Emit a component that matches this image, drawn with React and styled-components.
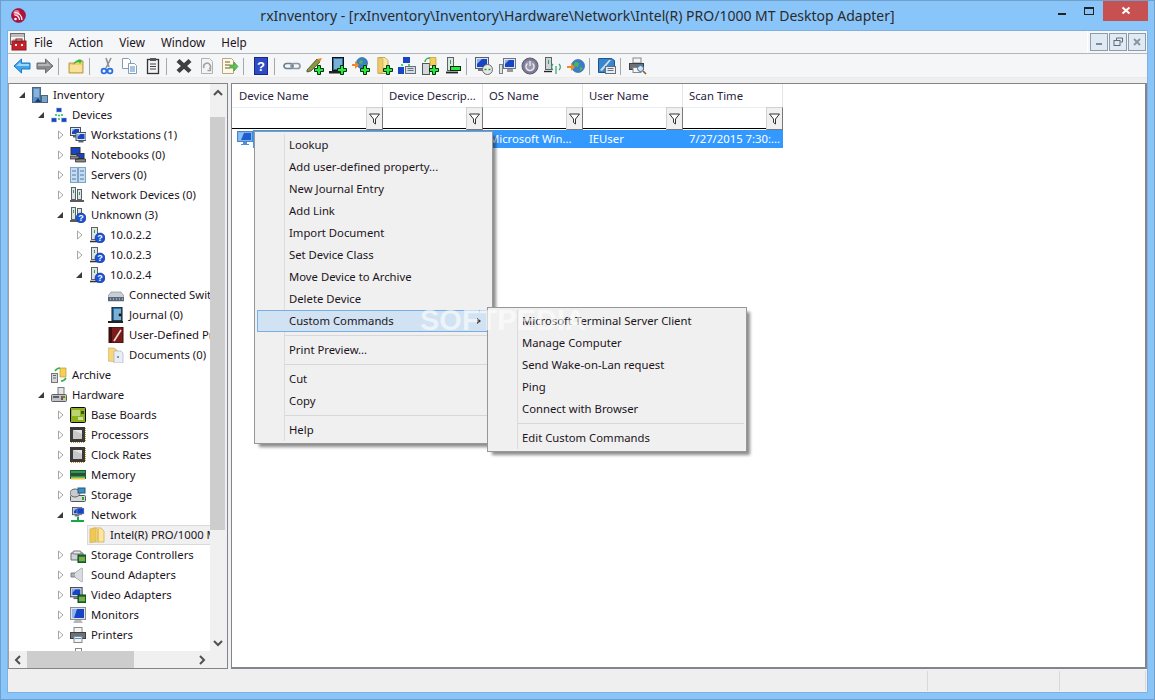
import React from "react";
import styled, { createGlobalStyle } from "styled-components";

const Global = createGlobalStyle`
  html, body { margin: 0; padding: 0; width: 1155px; height: 700px; overflow: hidden; }
  #root { width: 1155px; height: 700px; }
  * { box-sizing: border-box; }
`;

const FONT = `"Noto Sans", "Open Sans", "DejaVu Sans", sans-serif`;

const Win = styled.div`
  width: 1155px; height: 700px; background: #8ac5fa; border: 1px solid #6f9fcb;
  display: flex; flex-direction: column; font-family: ${FONT}; font-size: 11.3px; color: #1c1422;
  position: relative; overflow: hidden;
`;
const TitleBar = styled.div`
  height: 29px; flex: none; display: grid; grid-template-columns: 1fr auto 1fr; align-items: center;
`;
const LogoCell = styled.div`padding: 0 0 1px 10px; display: flex; align-items: center;`;
const TitleText = styled.div`font-size: 14px; color: #2b2b2b; white-space: nowrap;`;
const Caption = styled.div`display: flex; align-items: flex-start; height: 100%; justify-content: flex-end; padding-right: 6px;`;
const CapBtn = styled.div`
  width: ${p => p.$w}px; height: 20px; display: flex; align-items: center; justify-content: center;
  background: ${p => p.$close ? "#c75050" : "transparent"};
`;
const Client = styled.div`
  margin: 1px 7px 7px 7px; flex: 1; min-height: 0; display: flex; flex-direction: column; background: #f0f0f0;
  box-shadow: 0 0 0 1px #7fb0df;
`;
const MenuBar = styled.div`
  height: 23px; flex: none; display: flex; align-items: center; background: #f5f6f7; border-bottom: 1px solid #b4b7ba;
  padding-left: 2px;
`;
const MenuItem = styled.div`margin-right: 16px; color: #1c1422; font-size: 11.7px;`;
const MenuIconCell = styled.div`width: 24px; flex: none; display: flex; align-items: center;`;
const MdiBtns = styled.div`
  margin-left: auto; display: flex; gap: 1px; height: 22px; align-items: center; padding: 0 1px 0 2px;
  border-left: 1px solid #fff; background: #f5f6f7;
`;
const MdiBtn = styled.div`
  width: 18px; height: 18px; border: 1px solid #8e9ba8; background: #dfeaf5; display: flex; align-items: center; justify-content: center;
`;
const ToolBar = styled.div`
  height: 23px; flex: none; display: flex; align-items: center; background: #f5f6f7; padding: 1px 0 0 2px;
`;
const ToolSlot = styled.div`
  width: 23px; height: 18px; flex: none; display: flex; align-items: center; justify-content: center;
`;
const Sep = styled.div`width: 1px; height: 17px; background: #a5a8ab; flex: none; margin: 0 5px 0 2px;`;
const Strip = styled.div`height: 6px; flex: none; background: #efefef; border-top: 1px solid #ebebeb;`;
const Panes = styled.div`flex: 1; min-height: 0; display: flex; background: #f0f0f0;`;
const Left = styled.div`
  width: 220px; flex: none; background: #fff; border: 1px solid #82868c; border-left-color: #a0a0a0; display: grid;
  grid-template-columns: 201px 17px; grid-template-rows: 1fr 17px; overflow: hidden;
`;
const Splitter = styled.div`width: 3px; flex: none;`;
const Right = styled.div`
  flex: 1; background: #fff; border: 1px solid #82868c; border-bottom-width: 2px; position: relative; min-width: 0; border-right-width: 2px;
`;
const TreeClip = styled.div`overflow: hidden; padding-top: 1px; min-width: 0;`;
const Row = styled.div`
  height: 20px; display: flex; align-items: center; white-space: nowrap; padding-left: ${p => 9 + p.$lvl * 19}px; width: 201px; overflow: hidden;
  color: #1c1422;
`;
const Arrow = styled.span`width: 14px; height: 20px; flex: none; display: flex; align-items: center; justify-content: flex-start;`;
const IconBox = styled.span`width: 16px; height: 16px; flex: none; margin-right: 4px; display: flex; align-items: center; justify-content: center;`;
const Label = styled.span`padding-left: 1px; line-height: 18px;`;
const SelWrap = styled.span`
  display: flex; align-items: center; height: 20px; flex: 1; margin-left: -2px; padding-left: 1px; background: #f0f0f0; border: 1px solid #d9d9d9; border-right: 0;
`;
const VScroll = styled.div`background: #f0f0f0; display: flex; flex-direction: column; padding-right: 2px;`;
const ScrollBtn = styled.div`flex: none; height: 17px; width: ${p => p.$w || "100%"}; display: flex; align-items: center; justify-content: center;`;
const VThumb = styled.div`height: 413px; margin-top: 16px; background: #cdcdcd; flex: none;`;
const Spacer = styled.div`flex: 1;`;
const HScroll = styled.div`background: #f0f0f0; display: flex; align-items: stretch; grid-column: 1;`;
const HThumb = styled.div`width: 107px; background: #cdcdcd; flex: none; margin-left: 1px;`;
const Corner = styled.div`background: #f0f0f0;`;
const Header = styled.div`display: flex; height: 23px;`;
const HCell = styled.div`
  width: ${p => p.$first ? 151 : 100}px; flex: none; padding-left: ${p => p.$first ? 7 : 6}px; border-right: 1px solid #e5e5e5; display: flex; align-items: center; color: #2a2440; background: #fff;
  white-space: nowrap; overflow: hidden;
`;
const FilterRow = styled.div`display: flex; height: 22px; width: 551px; border-bottom: 1px solid #000; border-top: 1px solid #e7eef5;`;
const FCell = styled.div`width: ${p => p.$first ? 151 : 100}px; flex: none; display: flex; justify-content: flex-end; background: #fff;`;
const FBtn = styled.div`
  width: 17px; height: 23px; background: #f0f0f0; border: 1px solid #d0d0d0; border-right-color: #7a7a7a; border-bottom-color: #7a7a7a; display: flex; align-items: center; justify-content: center;
  margin-top: -1px; flex: none;
`;
const DataRow = styled.div`display: flex; height: 18px; width: 551px; margin-top: 1px;`;
const RowIconCell = styled.div`width: 21px; flex: none; padding: 1px 0 0 5px; background: #fff;`;
const DCell = styled.div`
  width: ${p => p.$w}px; flex: none; padding: 0 0 2px 6px; display: flex; align-items: center; white-space: nowrap; background: #3399ff; color: #fff;
`;

const CtxMenu = styled.div`
  position: absolute; background: #f0f0f0; border: 1px solid #979797; box-shadow: 4px 4px 3px -1px rgba(0,0,0,.45);
  padding: 2px; left: ${p => p.$x}px; top: ${p => p.$y}px; width: ${p => p.$w}px; color: #1c1422;
`;
const CtxInner = styled.div`position: relative;`;
const Gutter = styled.div`position: absolute; left: 27px; top: 0; bottom: 0; width: 1px; background: #dcdcdc;`;
const CtxItem = styled.div`
  height: 22px; line-height: 21px; padding-left: 32px; position: relative;
  ${p => p.$hot && `background: #d1e2f2; outline: 1px solid #78aee5; outline-offset: -1px;`}
`;
const CtxSep = styled.div`height: 1px; background: #d7d7d7; margin: 3px 0 3px 28px;`;
const SubArrow = styled.span`position: absolute; right: 9px; top: 8px; width: 0; height: 0; border-left: 4px solid #333; border-top: 3.5px solid transparent; border-bottom: 3.5px solid transparent;`;
const Watermark = styled.div`
  position: absolute; left: 419px; top: 303px; font-family: "Liberation Sans", sans-serif; font-weight: 700; font-size: 29px; color: rgba(255,255,255,.6); pointer-events: none;
`;
const StatusBar = styled.div`height: 23px; flex: none; background: #efefef; display: flex; justify-content: flex-end; padding: 2px 1px 1px 0;`;
const StatusCell = styled.div`width: ${p => p.$w}px; border-right: 1px solid #d9d9d9; flex: none; ${p => p.$first && `border-left: 1px solid #d9d9d9;`}`;

/* ---- small drawings ---- */
const S = ({ children, w = 16, h = 16 }) => <svg width={w} height={h} viewBox={`0 0 ${w} ${h}`}>{children}</svg>;

const Plus = ({ x = 7, y = 7 }) => (
  <g transform={`translate(${x} ${y})`}>
    <path d="M3.500 .5h3v3h3v3h-3v3h-3v-3h-3v-3h3z" fill="#27e83f" stroke="#042e0a" strokeWidth="1" />
  </g>
);
const Minus = () => <rect x="6.500" y="9.500" width="10" height="4" fill="#27e83f" stroke="#042e0a" />;
const Monitor = ({ x = 0, y = 0, s = 1 }) => (
  <g transform={`translate(${x} ${y}) scale(${s})`}>
    <rect x="0.5" y="0.5" width="10" height="8" fill="#dfe6ee" stroke="#47525e" />
    <rect x="2" y="2" width="7" height="5" fill="#1745c4" />
    <path d="M2 2h3l-3 3z" fill="#8fb4f0" />
    <rect x="3" y="9" width="5" height="1.500" fill="#5c6570" />
  </g>
);
const Q = ({ x = 11, y = 11, r = 5 }) => (
  <g>
    <circle cx={x} cy={y} r={r} fill="#1c52d6" stroke="#0c2f8f" strokeWidth=".6" />
    <text x={x} y={y + 3.2} textAnchor="middle" fontSize="9" fontWeight="700" fill="#fff" fontFamily="Liberation Sans">?</text>
  </g>
);
const Card = () => (
  <g><rect x="8" y="8" width="8" height="8" fill="#1e7f3b" stroke="#0b3c19" /><path d="M10 10v4M12 10v4M14 10v4" stroke="#e4d54a" /></g>
);

const icons = {
  inventory: <S><rect x=".5" y=".5" width="8" height="15" fill="#5a8fc6" stroke="#48677f" /><path d="M2 3h5M2 5h5M2 7h5M2 9h5" stroke="#bcd6ec" /><rect x="9.500" y="8.500" width="6" height="7" fill="#7aa5c8" stroke="#48677f" /><path d="M3 15l3-4 3 4z" fill="#123f77" /></S>,
  devices: <S><rect x="5.500" y="1" width="5" height="4" fill="#1745c4" stroke="#9bb0d8" strokeWidth=".5" /><rect x="0.5" y="11" width="5" height="4" fill="#1745c4" stroke="#9bb0d8" strokeWidth=".5" /><rect x="10.500" y="11" width="5" height="4" fill="#1745c4" stroke="#9bb0d8" strokeWidth=".5" /><circle cx="5" cy="8" r="1" fill="#18c44a" /><circle cx="8" cy="8.500" r="1" fill="#18c44a" /><circle cx="11" cy="8" r="1" fill="#18c44a" /><circle cx="8" cy="12" r="1" fill="#18c44a" /></S>,
  workstations: <S><Monitor x={0} y={0} /><Monitor x={5.5} y={5} /></S>,
  notebooks: <S><rect x="1" y="0.5" width="9" height="7" fill="#1745c4" stroke="#333" /><rect x="7" y="6.500" width="7" height="5" fill="#1745c4" stroke="#333" /><path d="M0 9h9v3H0zM5.500 12h10v3h-10z" fill="#888" stroke="#222" strokeWidth=".7" /></S>,
  servers: <S><rect x=".5" y=".5" width="7" height="15" fill="#c8dbef" stroke="#7ea4c8" /><rect x="8.500" y=".5" width="7" height="15" fill="#c8dbef" stroke="#7ea4c8" /><path d="M2 4h4M2 8h4M2 12h4M10 4h4M10 8h4M10 12h4" stroke="#4a7cb2" /></S>,
  netdev: <S><rect x="1.500" y=".5" width="4" height="12" fill="#dfe3e6" stroke="#5b6368" /><rect x="7.500" y="2.500" width="4" height="10" fill="#dfe3e6" stroke="#5b6368" /><path d="M3.500 3v3M9.500 5v3" stroke="#27a844" /><path d="M0 14h14" stroke="#333" strokeWidth="1.600" /></S>,
  unknownGrp: <S><rect x="1.500" y=".5" width="4" height="12" fill="#dfe3e6" stroke="#5b6368" /><rect x="7.500" y="1.500" width="4" height="8" fill="#dfe3e6" stroke="#5b6368" /><path d="M3.500 3v3" stroke="#27a844" /><path d="M0 14h8" stroke="#333" strokeWidth="1.600" /><Q /></S>,
  unknown: <S><rect x="2.500" y=".5" width="6" height="12" fill="#dfe3e6" stroke="#5b6368" /><path d="M5.500 3v3" stroke="#27a844" /><path d="M1 14.500h8" stroke="#333" strokeWidth="1.600" /><Q /></S>,
  switch: <S><path d="M3 5h10l3 4v5H0V9z" fill="#c9ced4" stroke="#78828c" strokeWidth=".6" /><rect x="0" y="10" width="16" height="4" fill="#5a6a7c" /><path d="M2 12h1M5 12h1M8 12h1M11 12h1M14 12h1" stroke="#d5e3f0" /></S>,
  journal: <S><rect x="4" y="0" width="10" height="14" fill="#2a6fa5" stroke="#111" /><rect x="6" y="2" width="7" height="11" fill="#79b0d6" /><circle cx="12" cy="8" r="1.400" fill="#111" /><rect x="0" y="14" width="15" height="2" fill="#222" /></S>,
  udp: <S><rect x="1" y="0" width="14" height="16" fill="#7a1c1c" stroke="#3c0d0d" /><rect x="1" y="0" width="3" height="16" fill="#3f0d0d" /><path d="M6 14L13 3" stroke="#f2dede" strokeWidth="1.600" /></S>,
  docs: <S><path d="M0 1h6l3 2v12l-9-1z" fill="#f5d67e" stroke="#c9a95f" strokeWidth=".6" /><path d="M6 4h7l2 2v10H6z" fill="#e9eef5" stroke="#aab3bd" strokeWidth=".7" /><circle cx="10" cy="10" r="1" fill="#4f79b5" /></S>,
  archive: <S><rect x="0.5" y="6.500" width="6" height="9" fill="#d5d8db" stroke="#777" /><path d="M2 8.500h3M2 11h3" stroke="#666" /><path d="M9 1h6v9H9z" fill="#f5cf56" stroke="#c29a35" strokeWidth=".7" /><path d="M4 4a6 6 0 0 1 5-3M10 14a6 6 0 0 0 5-3" stroke="#35b34a" strokeWidth="1.600" fill="none" /></S>,
  hardware: <S><rect x="7" y="0.5" width="6" height="8" fill="#e2e4e6" stroke="#7c7c7c" /><rect x="0.5" y="7.500" width="15" height="7" rx="1" fill="#bfc3c7" stroke="#5d6064" /><rect x="2" y="9" width="6" height="2" fill="#5d6064" /><rect x="10" y="9" width="2" height="2" fill="#d33" /><rect x="12" y="9" width="2" height="2" fill="#2a2" /><rect x="10" y="11" width="2" height="2" fill="#26c" /><rect x="12" y="11" width="2" height="2" fill="#ec2" /></S>,
  board: <S><rect x=".5" y=".5" width="15" height="15" rx="1" fill="#8cb31e" stroke="#101" /><path d="M3 3v6M5 3v6M7 3v6M9 3v6" stroke="#eef5c8" /><rect x="8" y="10" width="5" height="3" fill="#d7dc9a" /><rect x="11" y="4" width="3" height="3" fill="#3e5a10" /></S>,
  cpu: <S><rect x="0" y="0" width="15" height="15" fill="#3a3a3a" /><rect x="3" y="3" width="9" height="9" fill="#c7c7c7" /><path d="M3 3h9v4z" fill="#e4e4e4" /><path d="M1 15.500h14M15.500 1v14" stroke="#c79b24" strokeDasharray="1 1" /></S>,
  memory: <S><rect x=".5" y="3.500" width="15" height="8" fill="#2f9a55" stroke="#1d5c34" /><path d="M2 6v3M4 6v3M6 6v3M8 6v3M10 6v3M12 6v3M14 6v3" stroke="#222" strokeWidth="1.200" /><rect x="1" y="10.500" width="14" height="2" fill="#e7c64a" /></S>,
  storage: <S><rect x=".5" y="8.500" width="15" height="6" rx="1" fill="#d5d8db" stroke="#555" /><rect x="12" y="10" width="2" height="3" fill="#2a2" /><ellipse cx="5" cy="6" rx="5" ry="4" fill="#c7cbd0" stroke="#666" /><rect x="8" y="1" width="7" height="5" fill="#3d8fc0" stroke="#1d5a80" /></S>,
  network: <S><Monitor x={2} y={0} s={.9} /><rect x="7" y="1" width="7" height="6" fill="#1745c4" stroke="#bbb" strokeWidth=".5" /><path d="M8 10v3M1 14h13" stroke="#1aa54a" strokeWidth="2" /></S>,
  folderSel: <S><path d="M4 1h8l3 3v11H4z" fill="#fbe7a0" stroke="#d8b96c" /><path d="M1 2l6-1v13l-6 2z" fill="#f2c94f" stroke="#d8b96c" /><rect x="8" y="2" width="2" height="13" fill="#e9c262" /></S>,
  storagectl: <S><path d="M1 6h12v7H1z" fill="#cfd3d7" stroke="#6b6f73" /><rect x="3" y="4" width="8" height="3" rx="1" fill="#e6e8ea" stroke="#777" /><Card /></S>,
  sound: <S><path d="M1 6h4l7-5v14l-7-5H1z" fill="#aeb3b8" stroke="#7a7f84" /><path d="M5 6l7-5v14l-7-5z" fill="#dadde0" /></S>,
  video: <S><Monitor x={0} y={0} s={1.15} /><Card /></S>,
  monitor: <S><rect x=".5" y=".5" width="15" height="12" fill="#dfe3e8" stroke="#8a9098" /><rect x="2" y="2" width="12" height="9" fill="#1745c4" /><path d="M2 2h5l-3 9H2z" fill="#8fb4f0" /><path d="M5 13h6l2 3H3z" fill="#b4b8bc" /></S>,
  rowPc: <S><rect x=".5" y=".5" width="15" height="10" fill="#7fb4ea" stroke="#4c86c6" /><rect x="2" y="2" width="12" height="7" fill="#1d5fd0" /><path d="M2 2h5l-3 7H2z" fill="#8cc0f5" /><path d="M6 11h4v2h2v1H4v-1h2z" fill="#4f8fd8" /></S>,
  printer: <S><rect x="4" y="0.5" width="8" height="5" fill="#f5f5f5" stroke="#888" /><rect x=".5" y="5.500" width="15" height="6" fill="#6c7278" stroke="#3c4045" /><rect x="4" y="9.500" width="8" height="6" fill="#f5f5f5" stroke="#888" /><rect x="5" y="11" width="6" height="1" fill="#3a9bdc" /></S>,
  partial: <S><rect x="5.500" y="1.500" width="6" height="8" fill="#fff" stroke="#8a8a8a" /></S>,
};

const TriOpen = () => <svg width="8" height="8" viewBox="0 0 8 8"><path d="M1 7h6V1z" fill="#3b3b3b" /></svg>;
const TriClosed = () => <svg width="8" height="10" viewBox="0 0 8 10"><path d="M2.500 1l4.500 4-4.500 4z" fill="#fff" stroke="#a6a6a6" /></svg>;

const tree = [
  [0, "o", "inventory", "Inventory"],
  [1, "o", "devices", "Devices"],
  [2, "c", "workstations", "Workstations (1)"],
  [2, "c", "notebooks", "Notebooks (0)"],
  [2, "c", "servers", "Servers (0)"],
  [2, "c", "netdev", "Network Devices (0)"],
  [2, "o", "unknownGrp", "Unknown (3)"],
  [3, "c", "unknown", "10.0.2.2"],
  [3, "c", "unknown", "10.0.2.3"],
  [3, "o", "unknown", "10.0.2.4"],
  [4, "", "switch", "Connected Switches"],
  [4, "", "journal", "Journal (0)"],
  [4, "", "udp", "User-Defined Properties"],
  [4, "", "docs", "Documents (0)"],
  [1, "", "archive", "Archive"],
  [1, "o", "hardware", "Hardware"],
  [2, "c", "board", "Base Boards"],
  [2, "c", "cpu", "Processors"],
  [2, "c", "cpu", "Clock Rates"],
  [2, "c", "memory", "Memory"],
  [2, "c", "storage", "Storage"],
  [2, "o", "network", "Network"],
  [3, "", "folderSel", "Intel(R) PRO/1000 MT Desktop Adapter", true],
  [2, "c", "storagectl", "Storage Controllers"],
  [2, "c", "sound", "Sound Adapters"],
  [2, "c", "video", "Video Adapters"],
  [2, "c", "monitor", "Monitors"],
  [2, "c", "printer", "Printers"],
  [2, "", "partial", ""],
];

const T = ({ children }) => <svg width="18" height="18" viewBox="0 0 18 18">{children}</svg>;

const tools = {
  back: <T><path d="M1 9l7.500-7v4H17v6H8.500v4z" fill="#3ea6ee" stroke="#1d78c2" /><path d="M3 9l4.500-4v2H16v2z" fill="#9fd6fa" /></T>,
  fwd: <T><path d="M17 9L9.500 2v4H1v6h8.500v4z" fill="#8b8b8b" stroke="#6c6c6c" /><path d="M2 9V7h9V5l4 4z" fill="#b6b6b6" /></T>,
  up: <T><path d="M2 6h6l2-2h6v12H2z" fill="#f2cf6e" stroke="#b99a45" /><path d="M3 8h12v7H3z" fill="#f8e19a" /><path d="M6 8c1-3 3-5 6-5l-1-1 4 1-2 4-1-2c-2 0-4 1-6 3z" fill="#2cbb3a" /></T>,
  cut: <T><path d="M8 1l3 9M13 1l-5 10" stroke="#8a929a" strokeWidth="1.600" /><circle cx="6" cy="14" r="2.400" fill="none" stroke="#2a6fe0" strokeWidth="1.800" /><circle cx="12" cy="14" r="2.400" fill="none" stroke="#2a6fe0" strokeWidth="1.800" /></T>,
  copy: <T><path d="M1.500 1.500h6l2 2v8h-8z" fill="#fff" stroke="#8a9bb0" /><path d="M7.500 6.500h6l2 2v8h-8z" fill="#fff" stroke="#8a9bb0" /><path d="M9 10h5M9 12h5M9 14h5" stroke="#4d86c6" /></T>,
  paste: <T><rect x="3.500" y="2.500" width="11" height="14" fill="#f1f1f1" stroke="#333" strokeWidth="1.300" /><rect x="6" y="1" width="6" height="3" fill="#555" /><path d="M6 7h6M6 9.500h6M6 12h6" stroke="#444" /></T>,
  del: <T><path d="M3 3.500l12 11M15 3.500l-12 11" stroke="#3f3f3f" strokeWidth="4.400" /></T>,
  refresh: <T><path d="M3.500 1.500h8l3 3v12h-11z" fill="#f4f4f4" stroke="#b2b2b2" /><path d="M6 11a3.400 3.400 0 1 1 5.500 1" stroke="#a0a0a0" strokeWidth="1.500" fill="none" /><path d="M12.500 10.500v3h-3" fill="none" stroke="#a0a0a0" strokeWidth="1.300" /></T>,
  exportt: <T><path d="M1.500 1.500h9l2 2v13h-11z" fill="#fff8e2" stroke="#b4a68a" /><path d="M4 5h5M4 8h5M4 11h5" stroke="#6a5a3a" /><path d="M9 8h4V5l4 4.500-4 4.500v-3H9z" fill="#5cc44f" stroke="#3a8d32" strokeWidth=".6" /></T>,
  help: <T><rect x="2.500" y=".5" width="13" height="17" fill="#2d4bc4" stroke="#1a2a80" /><text x="9" y="14" textAnchor="middle" fontSize="13" fontWeight="700" fill="#fff" fontFamily="Liberation Sans">?</text></T>,
  link: <T><rect x="1" y="6.500" width="9" height="5" rx="2.500" fill="none" stroke="#6e7e90" strokeWidth="1.700" /><rect x="8" y="6.500" width="9" height="5" rx="2.500" fill="none" stroke="#8a98a8" strokeWidth="1.700" /></T>,
  addNote: <T><path d="M1 13L11 2l3 3-9 9-4 1z" fill="#8a9a3a" stroke="#333" strokeWidth=".7" /><path d="M11 2l3 3 2-4z" fill="#e88b2a" /><Plus x={8} y={8} /></T>,
  addJournal: <T><rect x="3.500" y=".5" width="11" height="13" fill="#2a6fa5" stroke="#111" /><rect x="5" y="2" width="8" height="10" fill="#79b0d6" /><rect x="0" y="14" width="12" height="2.500" fill="#222" /><Plus x={8} y={8} /></T>,
  addWeb: <T><circle cx="10" cy="6" r="5.500" fill="#3a7fc8" stroke="#1d5590" strokeWidth=".6" /><path d="M8 3l3 1-1 3-3-1zM12 7l2 1-2 2z" fill="#53b84b" /><path d="M0 7h3V4l4 4-4 4V9H0z" fill="#ef8a2c" /><Plus x={8} y={8} /></T>,
  addFolder: <T><path d="M3 .5h7l3 3v13H3z" fill="#fbe7a0" stroke="#c2a760" /><path d="M3 .5v16l5-1.500V2z" fill="#f0cb64" stroke="#c2a760" strokeWidth=".6" /><Plus x={8} y={8} /></T>,
  addDev: <T><rect x="5" y="0" width="7" height="6" fill="#1745c4" /><rect x="0" y="10" width="6" height="7" fill="#1745c4" /><rect x="7.500" y="9.500" width="10" height="7" fill="#d6dde6" stroke="#66707a" /><path d="M9.500 11.500h6M9.500 13.500h6" stroke="#66707a" /><circle cx="4" cy="8" r="1" fill="#18c44a" /><circle cx="11" cy="8" r="1" fill="#18c44a" /></T>,
  addArchive: <T><rect x="1.500" y="6.500" width="7" height="11" fill="#d5d8db" stroke="#555" /><path d="M9 .5h6v8H9z" fill="#f5cf56" stroke="#c29a35" strokeWidth=".7" /><path d="M4 5c0-2 2-4 5-4" stroke="#35b34a" strokeWidth="1.500" fill="none" /><Plus x={8} y={8} /></T>,
  rmDev: <T><rect x="3.500" y=".5" width="6" height="13" fill="#dfe3e6" stroke="#5b6368" /><path d="M6.500 3v4" stroke="#27a844" /><path d="M2 15.500h12" stroke="#222" strokeWidth="1.800" /><Minus /></T>,
  rdp: <T><rect x=".5" y=".5" width="13" height="11" fill="#dfe6ee" stroke="#55606c" /><rect x="2" y="2" width="10" height="8" fill="#1745c4" /><path d="M2 2h5l-5 5z" fill="#8fb4f0" /><rect x="3" y="12" width="7" height="2" fill="#777" /><circle cx="12.500" cy="12.500" r="5" fill="#e8e8e8" stroke="#6a6a6a" /><path d="M9.500 12.500h2M13.500 12.500h2" stroke="#1b9a3a" strokeWidth="1.400" /></T>,
  mgmt: <T><rect x="5.500" y="1.500" width="12" height="10" fill="#dfe6ee" stroke="#6c7580" /><rect x="7" y="3" width="9" height="7" fill="#1745c4" /><path d="M7 3h4l-4 4z" fill="#8fb4f0" /><rect x="1.500" y="7.500" width="3" height="9" fill="#dfe3e6" stroke="#7a8288" /><rect x="9" y="12" width="6" height="3" fill="#999" /></T>,
  power: <T><circle cx="9" cy="9" r="8" fill="#7d7a90" stroke="#5e5b70" /><circle cx="9" cy="9" r="5.500" fill="#9c99ae" /><path d="M6.500 6.500a4 4 0 1 0 5 0" stroke="#e8e8ee" strokeWidth="1.400" fill="none" /><path d="M9 4v5" stroke="#e8e8ee" strokeWidth="1.400" /></T>,
  ping: <T><rect x="1.500" y=".5" width="6" height="12" fill="#cfd3d7" stroke="#5b6368" /><path d="M4.500 3v4" stroke="#27a844" /><path d="M0 14.500h8" stroke="#222" strokeWidth="1.400" /><path d="M9 7a4 4 0 0 0 0 6M15 7a4 4 0 0 1 0 6M12 9v8" stroke="#35a070" strokeWidth="1.200" fill="none" /></T>,
  web: <T><circle cx="11" cy="9" r="6.500" fill="#3a7fc8" stroke="#1d5590" strokeWidth=".6" /><path d="M8 5l4 1-1 4-4-1zM13 10l3 1-3 3z" fill="#53b84b" /><path d="M0 9h4V6l4 4-4 4v-3H0z" fill="#ef8a2c" /></T>,
  cmd: <T><path d="M.5 1.500h13l3 2v12H.5z" fill="#3a86cc" stroke="#1d5590" /><path d="M2 13l9-10h2L4 14z" fill="#cde3f5" /><rect x="7.500" y="9.500" width="10" height="7" fill="#e9eef3" stroke="#66707a" /><path d="M9.500 11.500h6M9.500 13.500h6" stroke="#66707a" /></T>,
  print: <T><rect x="4" y="1" width="8" height="5" fill="#f5f5f5" stroke="#888" /><rect x=".5" y="6.500" width="14" height="6" fill="#6c7278" stroke="#3c4045" /><rect x="4" y="10.500" width="8" height="5" fill="#f5f5f5" stroke="#888" /><circle cx="11.500" cy="11.500" r="3" fill="#cfe3f5" stroke="#3d6fa8" /><path d="M14 14l3 3" stroke="#8a5a2a" strokeWidth="1.600" /></T>,
};

const Funnel = () => <svg width="11" height="12" viewBox="0 0 11 12"><path d="M.5 1h10L6.500 6v5l-2-1.500V6z" fill="#fff" stroke="#333" /></svg>;

const MenuGlyph = () => (
  <svg width="17" height="18" viewBox="0 0 17 18">
    <rect x=".5" y=".5" width="14" height="11" fill="#f4f4f4" stroke="#6d6d6d" />
    <rect x="1" y="1" width="13" height="3" fill="#bcbcbc" /><path d="M3 7h9M3 9h9" stroke="#8c8c8c" />
    <rect x="2" y="8" width="14" height="9" fill="#c8202a" stroke="#8c1c20" /><rect x="6" y="6" width="6" height="3" fill="none" stroke="#8c1c20" />
    <rect x="5" y="11" width="2" height="2" fill="#eee" /><rect x="11" y="11" width="2" height="2" fill="#eee" />
  </svg>
);
const AppLogo = () => (
  <svg width="15" height="15" viewBox="0 0 15 15">
    <circle cx="7.500" cy="7.500" r="7" fill="#b3123f" stroke="#7a1030" strokeWidth=".6" />
    <circle cx="5.500" cy="5" r="3" fill="#e77a96" />
    <path d="M3.500 7a5 5 0 0 1 5 5M3.500 4.500a7.500 7.500 0 0 1 7.500 7.500" stroke="#fff" strokeWidth="1.200" fill="none" />
    <circle cx="4.500" cy="11" r="1.300" fill="#fff" />
  </svg>
);

const ScrollChev = ({ d }) => {
  const p = { up: "M1 6l4-4 4 4", down: "M1 2l4 4 4-4", left: "M6 1L2 5l4 4", right: "M2 1l4 4-4 4" }[d];
  const vertical = d === "up" || d === "down";
  return <svg width={vertical ? 10 : 8} height={vertical ? 8 : 10} viewBox={vertical ? "0 0 10 8" : "0 0 8 10"}><path d={p} fill="none" stroke="#505050" strokeWidth="2" /></svg>;
};

const columns = ["Device Name", "Device Descrip...", "OS Name", "User Name", "Scan Time"];
const cells = [["", 130], ["", 100], ["Microsoft Win...", 100], ["IEUser", 100], ["7/27/2015 7:30:...", 100]];
const menu1 = ["Lookup", "Add user-defined property...", "New Journal Entry", "Add Link", "Import Document", "Set Device Class", "Move Device to Archive", "Delete Device"];
const menu2 = ["Microsoft Terminal Server Client", "Manage Computer", "Send Wake-on-Lan request", "Ping", "Connect with Browser"];
const toolGroups = [["back", "fwd"], ["up"], ["cut", "copy", "paste"], ["del", "refresh", "exportt"], ["help"], ["link", "addNote", "addJournal", "addWeb", "addFolder", "addDev", "addArchive", "rmDev"], ["rdp", "mgmt", "power", "ping", "web"], ["cmd"], ["print"]];

export default function App() {
  return (
    <Win>
      <Global />
      <TitleBar>
        <LogoCell><AppLogo /></LogoCell>
        <TitleText>rxInventory - [rxInventory\Inventory\Hardware\Network\Intel(R) PRO/1000 MT Desktop Adapter]</TitleText>
        <Caption>
          <CapBtn $w={26}><svg width="10" height="20"><rect x="1" y="12" width="8" height="2" fill="#222" /></svg></CapBtn>
          <CapBtn $w={28}><svg width="11" height="20"><rect x=".5" y="6.500" width="9" height="7" fill="none" stroke="#222" /><rect x="0" y="6" width="10" height="2" fill="#222" /></svg></CapBtn>
          <CapBtn $w={45} $close><svg width="10" height="10" viewBox="0 0 10 10"><path d="M1.500 1.500l7 6M8.500 1.500l-7 6" stroke="#fff" strokeWidth="2" /></svg></CapBtn>
        </Caption>
      </TitleBar>
      <Client>
        <MenuBar>
          <MenuIconCell><MenuGlyph /></MenuIconCell>
          {["File", "Action", "View", "Window", "Help"].map(m => <MenuItem key={m}>{m}</MenuItem>)}
          <MdiBtns>
            <MdiBtn><svg width="10" height="10"><rect x="2" y="6" width="6" height="2" fill="#7d8b99" /></svg></MdiBtn>
            <MdiBtn><svg width="10" height="10"><path d="M3.500 3V1h6v4h-2" fill="none" stroke="#5f6b77" /><rect x="1" y="3.500" width="6" height="5" fill="none" stroke="#5f6b77" /></svg></MdiBtn>
            <MdiBtn><svg width="10" height="10"><path d="M2 2l6 6M8 2l-6 6" stroke="#8a97a3" strokeWidth="2" /></svg></MdiBtn>
          </MdiBtns>
        </MenuBar>
        <ToolBar>
          {toolGroups.map((g, i) => (
            <React.Fragment key={i}>
              {i > 0 && <Sep />}
              {g.map(k => <ToolSlot key={k}>{tools[k]}</ToolSlot>)}
            </React.Fragment>
          ))}
        </ToolBar>
        <Strip />
        <Panes>
          <Left>
            <TreeClip>
              {tree.map(([lvl, ar, ic, text, sel], i) => (
                <Row key={i} $lvl={lvl}>
                  <Arrow>{ar === "o" ? <TriOpen /> : ar === "c" ? <TriClosed /> : null}</Arrow>
                  {sel ? (
                    <SelWrap><IconBox>{icons[ic]}</IconBox><Label>{text}</Label></SelWrap>
                  ) : (
                    <><IconBox>{icons[ic]}</IconBox><Label>{text}</Label></>
                  )}
                </Row>
              ))}
            </TreeClip>
            <VScroll>
              <ScrollBtn><ScrollChev d="up" /></ScrollBtn>
              <VThumb />
              <Spacer />
              <ScrollBtn><ScrollChev d="down" /></ScrollBtn>
            </VScroll>
            <HScroll>
              <ScrollBtn $w="17px"><ScrollChev d="left" /></ScrollBtn>
              <HThumb />
              <Spacer />
              <ScrollBtn $w="17px"><ScrollChev d="right" /></ScrollBtn>
            </HScroll>
            <Corner />
          </Left>
          <Splitter />
          <Right>
            <Header>{columns.map((c, i) => <HCell key={c} $first={i === 0}>{c}</HCell>)}</Header>
            <FilterRow>{columns.map((c, i) => <FCell key={c} $first={i === 0}><FBtn><Funnel /></FBtn></FCell>)}</FilterRow>
            <DataRow>
              <RowIconCell>{icons.rowPc}</RowIconCell>
              {cells.map(([c, w], i) => <DCell key={i} $w={w}>{c}</DCell>)}
            </DataRow>
          </Right>
        </Panes>
        <StatusBar>
          <StatusCell $first $w={133} /><StatusCell $w={86} />
        </StatusBar>
      </Client>
      <CtxMenu $x={253} $y={130} $w={239}>
        <CtxInner>
          <Gutter />
          {menu1.map(m => <CtxItem key={m}>{m}</CtxItem>)}
          <CtxItem $hot>Custom Commands<SubArrow /></CtxItem>
          <CtxSep />
          <CtxItem>Print Preview...</CtxItem>
          <CtxSep />
          <CtxItem>Cut</CtxItem>
          <CtxItem>Copy</CtxItem>
          <CtxSep />
          <CtxItem>Help</CtxItem>
        </CtxInner>
      </CtxMenu>
      <CtxMenu $x={486} $y={306} $w={260}>
        <CtxInner>
          <Gutter />
          {menu2.map(m => <CtxItem key={m}>{m}</CtxItem>)}
          <CtxSep />
          <CtxItem>Edit Custom Commands</CtxItem>
        </CtxInner>
      </CtxMenu>
      <Watermark>SOFTPEDIA</Watermark>
    </Win>
  );
}
